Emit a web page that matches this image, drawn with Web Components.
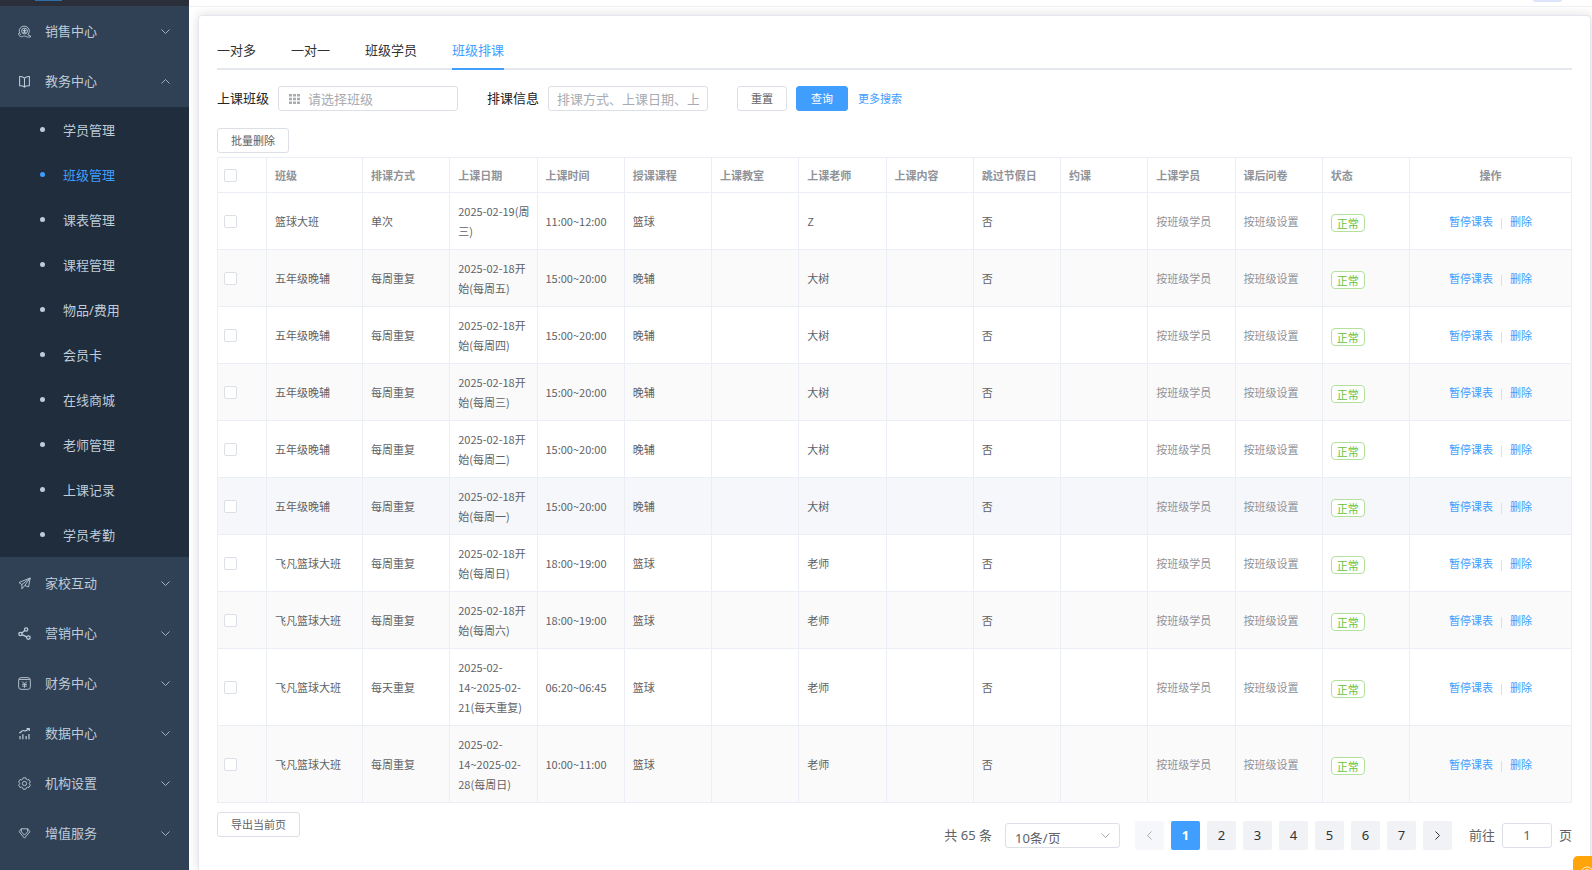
<!DOCTYPE html>
<html lang="zh-CN">
<head>
<meta charset="utf-8">
<title>班级排课</title>
<style>
  body { margin: 0; background: #fff; font: 13px/20px "Noto Sans", "Noto Sans CJK SC", sans-serif; color: #303133; }
</style>
</head>
<body>
<app-shell>
  <side-nav slot="nav"></side-nav>
  <tab-bar></tab-bar>
  <search-form></search-form>
  <schedule-table></schedule-table>
  <page-bar></page-bar>
</app-shell>
<script>
const base = `<style>
  *, *::before { box-sizing: border-box; }
  a { color: #409eff; text-decoration: none; }
  button, input, select { font: inherit; color: inherit; margin: 0; }
  input::placeholder { color: #a8abb2; opacity: 1; }
  .btn { height: 25px; padding: 0 13px; border: 1px solid #dcdfe6; border-radius: 3px; background: #fff; color: #606266; font-size: 11px; line-height: 16px; cursor: pointer; }
  .btn.primary { background: #409eff; border-color: #409eff; color: #fff; }
  .field { height: 25px; border: 1px solid #dcdfe6; border-radius: 3px; background: #fff; outline: none; }
</style>`;

function define(name, html) {
  const template = document.createElement('template');
  template.innerHTML = base + html;
  customElements.define(name, class extends HTMLElement {
    constructor() {
      super();
      this.attachShadow({ mode: 'open' }).append(template.content.cloneNode(true));
    }
  });
}

define('app-shell', `<style>
  :host { display: flex; height: 100vh; overflow: hidden; }
  .body { flex: 1; min-width: 0; display: flex; flex-direction: column; }
  header { flex: none; height: 7px; padding-right: 30px; border-bottom: 1px solid #f0f1f2; display: flex; justify-content: flex-end; background: #fff; }
  .user { width: 29px; height: 2px; background: #dde4fb; border-radius: 0 0 8px 8px; }
  main { flex: 1; margin: 8px 1px 0 9px; padding: 24px 18px 0; border: 1px solid #e4e7ed; border-bottom: 0; border-radius: 4px 4px 0 0; box-shadow: 0 0 11px rgba(0,0,0,.14); background: #fff; }
  .help { position: fixed; right: -9px; bottom: -14px; width: 28px; height: 28px; padding: 3px 6px; border: 0; border-radius: 5px; background: #ffa50a; display: flex; align-items: flex-start; }
  .help svg { flex: none; width: 16px; height: 16px; }
</style>
<slot name="nav"></slot>
<div class="body">
  <header><div class="user"></div></header>
  <main><slot></slot></main>
</div>
<button class="help" aria-label="客服"><svg viewBox="0 0 16 16" fill="none" stroke="#fff" stroke-opacity=".8"><circle cx="8" cy="14" r="6"/><circle cx="8" cy="14" r="3.500"/></svg></button>`);

define('side-nav', `<style>
  :host { display: flex; flex-direction: column; flex: none; width: 189px; background: #304156; overflow: hidden; }
  .brand { flex: none; height: 6px; background: #2b2f3a; padding-left: 35px; }
  .brand::before { content: ""; display: block; width: 27px; height: 1px; background: #2f6ea8; }
  .sub { display: block; margin: 1px 0; background: #1f2d3d; }
  .sub a { display: flex; align-items: center; height: 45px; padding-left: 40px; color: #bfcbd9; }
  .sub a::before { content: ""; width: 5px; height: 5px; margin-right: 18px; border-radius: 50%; background: currentColor; }
  .sub a.on { color: #409eff; }
</style>
<div class="brand"></div>
<nav-item icon="sales">销售中心</nav-item>
<nav-item icon="book" open>教务中心</nav-item>
<nav class="sub">
  <a href="#">学员管理</a><a href="#" class="on">班级管理</a><a href="#">课表管理</a><a href="#">课程管理</a><a href="#">物品/费用</a>
  <a href="#">会员卡</a><a href="#">在线商城</a><a href="#">老师管理</a><a href="#">上课记录</a><a href="#">学员考勤</a>
</nav>
<nav-item icon="plane">家校互动</nav-item>
<nav-item icon="share">营销中心</nav-item>
<nav-item icon="money">财务中心</nav-item>
<nav-item icon="chart">数据中心</nav-item>
<nav-item icon="gear">机构设置</nav-item>
<nav-item icon="gem">增值服务</nav-item>`);

const icons = {
  sales: '<path d="M3.600 12.200A6.200 6.200 0 1 1 12 12M1.600 9.500C.2 11 .6 13 2.400 13.600c1 1.200 3 1 3.600.4s3-.6 4 .2 2 .6 5.400.6v-1.400l-3.400-1.400"/><circle cx="8" cy="7.400" r="3.600"/><path d="M8 4.600v5.600M5.800 6.800h4.400M6.400 9.600 8 7.400l1.600 2.200"/>',
  book: '<path d="M8 4v10.500M8 4C6.800 2.400 4.800 1.600 2 1.800v11.400c2.600-.2 4.600.2 6 1.600 1.400-1.400 3.400-1.800 6-1.600V1.800C11.200 1.600 9.200 2.400 8 4z" stroke-width="1.300"/>',
  plane: '<path d="M15 1.200 1.200 6.800l3.600 2.600L15 1.200l-2 11-4.600-1.800M4.800 9.400v5.200l3.600-4.200L15 1.200"/>',
  share: '<g stroke-width="1.600"><circle cx="10" cy="3" r="2"/><circle cx="3" cy="8.600" r="2"/><circle cx="12.800" cy="13" r="2.200"/><path d="M8.400 4.200 4.600 7.400M4.900 9.400l5.800 2.700"/></g>',
  money: '<rect x=".8" y=".8" width="14.400" height="14.400" rx="3"/><path d="M1.500 3h13M5.200 5.600 8 8.600l2.800-3M8 8.600v4.600M5 9h6M5 11.200h6"/>',
  chart: '<path d="M2.500 15v-4M6 15V9M10 15v-4M13.500 15V8.500" stroke-width="1.500"/><path d="M1.500 7.500C4 6.500 5 3.500 7.500 4.500S10.500 4 13.500 2.400M10.500 2H13.900V5" stroke-width="1.400"/>',
  gear: '<path d="M6.400 1h3.200l.7 1.800 1.300.7 2-.3 1.600 2.800L14 7.600v.8l1.200 1.600-1.600 2.800-2-.3-1.300.7-.7 1.800H6.400l-.7-1.800-1.300-.7-2 .3L.8 10 2 8.400v-.8L.8 6l1.600-2.800 2 .3 1.300-.7z"/><circle cx="8" cy="8" r="2.600"/>',
  gem: '<path d="M4 2.200h8l2.600 3.600L8 13.800 1.400 5.800z"/><path d="M4.200 6 8 10l3.800-4M4 2.200 4.200 6M12 2.200 11.800 6" />'
};
customElements.define('nav-item', class extends HTMLElement {
  constructor() {
    super();
    const open = this.hasAttribute('open');
    this.attachShadow({ mode: 'open' }).innerHTML = base + `<style>
      :host { display: block; flex: none; }
      button { display: flex; align-items: center; width: 100%; height: 50px; padding: 0 19px 0 18px; border: 0; background: none; color: #bfcbd9; text-align: left; }
      .icon { width: 13px; height: 13px; margin-right: 14px; flex: none; }
      span { flex: 1; }
      .chev { width: 9px; height: 5px; }
    </style>
    <button aria-expanded="${open}"><svg class="icon" viewBox="0 0 16 16" fill="none" stroke="currentColor" stroke-width="1.1">${icons[this.getAttribute('icon')]}</svg><span><slot></slot></span>
    <svg class="chev" viewBox="0 0 9 5" fill="none" stroke="currentColor" stroke-width=".8"><path d="${open ? 'M.5 4.5l4-4 4 4' : 'M.5.5l4 4 4-4'}"/></svg></button>`;
  }
});

define('tab-bar', `<style>
  :host { display: block; }
  nav { display: flex; gap: 35px; border-bottom: 2px solid #e4e7ed; }
  a { height: 30px; margin-bottom: -2px; color: #303133; }
  a.on { color: #409eff; border-bottom: 2px solid #409eff; }
</style>
<nav><a href="#">一对多</a><a href="#">一对一</a><a href="#">班级学员</a><a href="#" class="on">班级排课</a></nav>`);

define('search-form', `<style>
  :host { display: block; padding: 16px 0 4px; }
  form { display: flex; align-items: center; margin-bottom: 17px; }
  label { margin-right: 9px; padding-bottom: 2px; color: #222; }
  .pick { position: relative; width: 180px; margin-right: 29px; display: flex; }
  .pick input { width: 100%; padding: 0 8px 0 29px; }
  .pick svg { position: absolute; left: 11px; top: 8px; width: 11px; height: 10px; fill: #a8abb2; }
  .info { width: 160px; padding: 0 8px; margin-right: 29px; }
  .query { padding: 0 14px; margin: 0 10px 0 9px; }
  form a { font-size: 11px; }
  .batch { display: block; }
</style>
<form onsubmit="return false">
  <label for="cls">上课班级</label>
  <div class="pick"><svg viewBox="0 0 11 10"><path d="M0 0h3v2.600H0zM4 0h3v2.600H4zM8 0h3v2.600H8zM0 3.700h3v2.600H0zM4 3.700h3v2.600H4zM8 3.700h3v2.600H8zM0 7.400h3V10H0zM4 7.400h3V10H4zM8 7.400h3V10H8z"/></svg><input id="cls" class="field" placeholder="请选择班级"></div>
  <label for="info">排课信息</label>
  <input id="info" class="field info" placeholder="排课方式、上课日期、上课时间">
  <button type="reset" class="btn">重置</button>
  <button class="btn primary query">查询</button>
  <a href="#">更多搜索</a>
</form>
<button class="btn batch">批量删除</button>`);

const heads = ['班级','排课方式','上课日期','上课时间','授课课程','上课教室','上课老师','上课内容','跳过节假日','约课','上课学员','课后问卷','状态'];
const weekly = (d, time, cls, course, teacher) => [cls, '每周重复', `2025-02-18开<br>始(每周${d})`, time, course, teacher];
const evening = d => weekly(d, '15:00~20:00', '五年级晚辅', '晚辅', '大树');
const ball = d => weekly(d, '18:00~19:00', '飞凡篮球大班', '篮球', '老师');
const rows = [
  ['篮球大班', '单次', '2025-02-19(周<br>三)', '11:00~12:00', '篮球', 'Z'],
  evening('五'), evening('四'), evening('三'), evening('二'), evening('一'), ball('日'), ball('六'),
  ['飞凡篮球大班', '每天重复', '2025-02-<br>14~2025-02-<br>21(每天重复)', '06:20~06:45', '篮球', '老师'],
  ['飞凡篮球大班', '每周重复', '2025-02-<br>14~2025-02-<br>28(每周日)', '10:00~11:00', '篮球', '老师']
];
define('schedule-table', `<style>
  :host { display: block; font-family: "Noto Sans CJK SC", sans-serif; font-size: 11px; }
  table { width: 100%; table-layout: fixed; border-collapse: separate; border-spacing: 0; border: solid #ebeef5; border-width: 1px 0 0 1px; color: #606266; }
  .c0 { width: 49px; } .c1 { width: 96px; } .cz { width: 162px; }
  th, td { padding: 8px; border: solid #ebeef5; border-width: 0 1px 1px 0; text-align: left; white-space: nowrap; line-height: 20px; }
  th { padding: 7px 8px; color: #909399; font-weight: 700; }
  th:first-child, td:first-child { padding-left: 6px; }
  th:last-child, td:last-child { text-align: center; }
  tbody tr:nth-child(even) { background: #fafafa; }
  tbody tr.hover { background: #f5f7fa; }
  input { appearance: none; display: block; width: 13px; height: 13px; border: 1px solid #dcdfe6; border-radius: 2px; background: #fff; }
  .soft { color: #909399; }
  .tag { display: inline-block; vertical-align: middle; height: 18px; padding: 0 5px; border: 1px solid #b3e19d; border-radius: 4px; background: #fff; color: #67c23a; line-height: 16px; }
  i { display: inline-block; width: 1px; height: 11px; margin: 0 8px; background: #dcdfe6; vertical-align: middle; }
</style>
<table>
  <colgroup><col class="c0"><col class="c1">${'<col>'.repeat(12)}<col class="cz"></colgroup>
  <thead><tr><th><input type="checkbox" aria-label="全选"></th>${heads.map(h => `<th>${h}</th>`).join('')}<th>操作</th></tr></thead>
  <tbody>${rows.map((r, n) => `<tr${n === 5 ? ' class="hover"' : ''}><td><input type="checkbox" aria-label="选择"></td><td>${r[0]}</td><td>${r[1]}</td><td>${r[2]}</td><td>${r[3]}</td><td>${r[4]}</td><td></td><td>${r[5]}</td><td></td><td>否</td><td></td><td class="soft">按班级学员</td><td class="soft">按班级设置</td><td><span class="tag">正常</span></td><td><a href="#">暂停课表</a><i></i><a href="#">删除</a></td></tr>`).join('')}</tbody>
</table>`);

define('page-bar', `<style>
  :host { display: flex; justify-content: space-between; align-items: flex-start; padding-top: 9px; color: #606266; }
  nav { display: flex; align-items: center; margin-top: 9px; line-height: 29px; }
  .size { position: relative; margin: 0 15px 0 13px; display: flex; }
  select { appearance: none; width: 115px; padding: 0 9px 3px; }
  .size svg { position: absolute; right: 10px; top: 10px; width: 9px; height: 5px; }
  .pages { display: flex; gap: 7px; }
  .pages button { width: 29px; height: 29px; padding: 0; border: 0; border-radius: 2px; background: #f0f2f5; color: #303133; display: grid; place-items: center; }
  .pages .on { background: #409eff; color: #fff; font-weight: 700; }
  .pages .off { background: #f5f7fa; color: #a8abb2; }
  .pages svg { width: 5px; height: 9px; }
  label { margin-left: 17px; }
  .go { width: 50px; margin: 0 7px; text-align: center; padding: 0; }
</style>
<button class="btn">导出当前页</button>
<nav aria-label="分页">
  <span>共 65 条</span>
  <div class="size"><select class="field" aria-label="每页条数"><option>10条/页</option></select><svg viewBox="0 0 9 5" fill="none" stroke="#a8abb2"><path d="M.5.5l4 4 4-4"/></svg></div>
  <div class="pages">
    <button class="off" disabled aria-label="上一页"><svg viewBox="0 0 5 9" fill="none" stroke="currentColor"><path d="M4.500.5l-4 4 4 4"/></svg></button>
    <button class="on">1</button><button>2</button><button>3</button><button>4</button><button>5</button><button>6</button><button>7</button>
    <button aria-label="下一页"><svg viewBox="0 0 5 9" fill="none" stroke="currentColor"><path d="M.5.5l4 4-4 4"/></svg></button>
  </div>
  <label for="go">前往</label><input id="go" class="field go" value="1"><span>页</span>
</nav>`);
</script>
</body>
</html>
